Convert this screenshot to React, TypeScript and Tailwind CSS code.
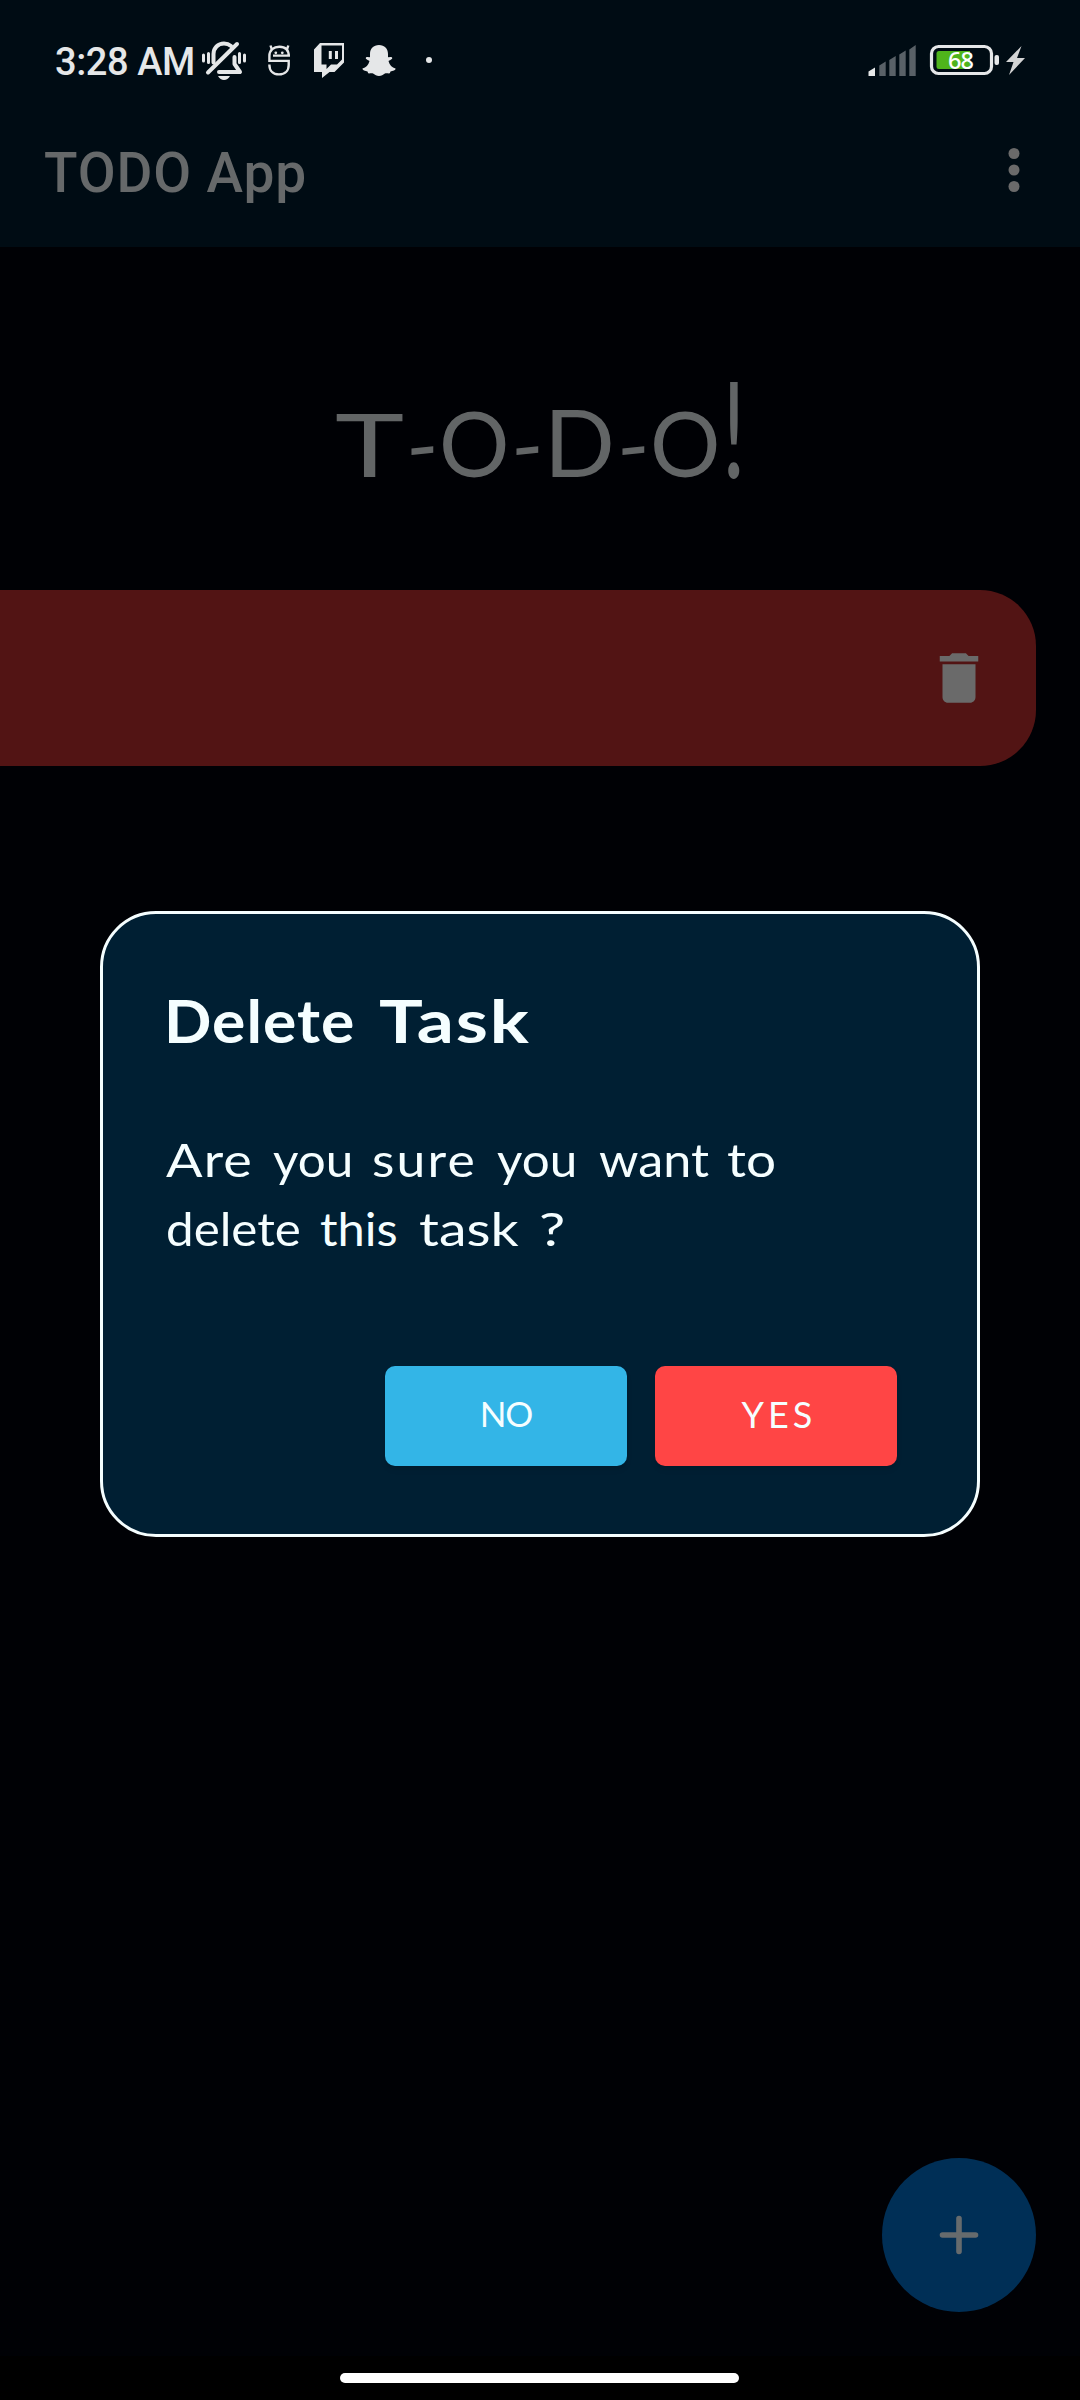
import type { ReactNode } from "react";

function Word({ children, className }: { children: ReactNode; className: string }) {
  return <span className={`block shrink-0 whitespace-nowrap ${className}`}>{children}</span>;
}

function StatusBar() {
  return (
    <div className="flex h-[120px] items-start">
      <span className="ml-[55px] mt-[40px] w-[147px] whitespace-nowrap text-[38px] leading-[44px] font-medium tracking-[-0.4px] text-[#e5e7e8]">
        3:28 AM
      </span>
      <svg className="mt-[30px] h-[60px] w-[248px] shrink-0" viewBox="202 30 248 60" fill="none">
        <g stroke="#e5e7e8" strokeLinecap="round">
          <path strokeWidth="3" d="M203.500 55v6M208.500 53.500v9M239.500 53.500v9M244.500 55v6" />
          <path strokeWidth="4" d="M213.500 62.500V54c0-6 4.500-10.500 10.500-10.500 3 0 5 .8 7 2.500M234.500 57v7l5.500 8H219" strokeLinejoin="round" />
          <path strokeWidth="4" d="M208 72.500L237 44" />
        </g>
        <path fill="#e5e7e8" d="M218 76h12c-1.500 2.700-3.500 4-6 4s-4.500-1.300-6-4z" />
        <g stroke="#e5e7e8" strokeWidth="2.400">
          <path d="M290 55.600H273M288.700 56c0-6-3.500-9.300-9.300-9.300s-10 3.500-10 9.300v4.900h19.300v4c0 6-4 9.500-9.700 9.500s-9.600-3.500-9.600-9.500v-.5M271.800 49.500l-1.300-4M287 49.500l1.300-4" />
        </g>
        <g fill="#e5e7e8">
          <circle cx="275.800" cy="52.800" r="1.400" />
          <circle cx="282.300" cy="52.800" r="1.400" />
          <path fillRule="evenodd" d="M320 43h24v19.500l-9.500 9.500h-5l-7.500 6v-6h-8V49.500zM321.500 45.500v19h5v4.500l4.500-4.500h6l5-5v-14z" />
          <path d="M328.800 51h3v8h-3zM335 51h3v8h-3z" />
          <path d="M379 45c5.500 0 9 3.500 9 9v3c1.500.5 3-.4 4 .6 1 1.400-1.500 2.400-3.500 3.400 1 4 3.500 6.500 7 7.500.7 1.500-3 2.500-5 3-.5 1-.5 2-1.500 2-1.500 0-3-.5-4.500.3-1.500.9-3 2.200-5.500 2.200s-4-1.300-5.500-2.200c-1.500-.8-3-.3-4.500-.3-1 0-1-1-1.500-2-2-.5-5.500-1.500-5-3 3.500-1 6-3.500 7-7.500-2-1-4.500-2-3.500-3.400 1-1 2.500-.1 4-.6v-3c0-5.500 3.500-9 9-9z" />
          <circle cx="429" cy="60" r="3" />
        </g>
      </svg>
      <svg className="ml-auto mr-[50px] mt-[30px] h-[60px] w-[165px] shrink-0" viewBox="865 30 165 60" fill="none">
        <path fill="#e5e7e8" d="M868.500 71.500l6.500-4V76h-6.500z" />
        <path fill="#596167" d="M879.300 65.500l6.400-4V76h-6.400zM889.300 60l6.400-4v20h-6.400zM899.300 54.500l6.400-4V76h-6.400zM909.300 49.500l6.400-4.500v31h-6.400z" />
        <rect x="931.500" y="46.500" width="60" height="27" rx="7" stroke="#e5e7e8" strokeWidth="3.200" />
        <path fill="#4fb41b" d="M939 51h31v18h-31q-2.500 0-2.500-2.500v-13q0-2.500 2.500-2.500z" />
        <rect x="994.500" y="55" width="4.500" height="10" rx="2" fill="#e5e7e8" />
        <path fill="#d3d4d4" d="M1021.500 46l-15.500 16h7.500l-4.500 13 16-17h-8z" />
        <text x="948" y="69" fill="#fff" fontSize="23.500" fontWeight="500" textLength="26" className="font-['Noto_Sans']">
          68
        </text>
      </svg>
    </div>
  );
}

function AppBar() {
  return (
    <div className="flex h-[127px] items-start">
      <h1 className="ml-[44px] mt-[21px] text-[55px] leading-[64px] font-medium tracking-[0.9px] text-[#66696a]">TODO App</h1>
      <svg className="ml-auto mr-[33px] mt-[17px] size-[66px]" viewBox="0 0 24 24" fill="#6a6a6a">
        <circle cx="12" cy="6" r="2" />
        <circle cx="12" cy="12" r="2" />
        <circle cx="12" cy="18" r="2" />
      </svg>
    </div>
  );
}

function Banner() {
  return (
    <div className="flex h-[343px] items-start pl-[335px] pt-[136px] font-['Lato'] text-[88px] leading-[120px] text-[#626566]">
      <Word className="w-[71px] origin-left scale-x-[1.33]">T</Word>
      <Word className="w-[33px] origin-[17px_68px] -skew-y-6">-</Word>
      <Word className="w-[72px] origin-[0_93px] scale-y-[1.03]">O</Word>
      <Word className="w-[33px] origin-[17px_68px] -skew-y-6">-</Word>
      <Word className="w-[73px] origin-[0_93px] scale-x-[1.06] scale-y-[1.06]">D</Word>
      <Word className="w-[33px] origin-[17px_68px] -skew-y-6">-</Word>
      <Word className="w-[72px] origin-[0_93px] scale-y-[1.03]">O</Word>
      <Word className="origin-[17px_93px] scale-y-[1.53]">!</Word>
    </div>
  );
}

function Dialog() {
  return (
    <div className="absolute left-[100px] top-[911px] flex h-[626px] w-[880px] flex-col rounded-[56px] border-[3px] border-[#f5feff] bg-[#001f33] font-['Lato'] text-[#f5feff]">
      <h2 className="mt-[70px] flex pl-[61px] text-[60px] leading-[72px] font-bold">
        <Word className="w-[215px] origin-left scale-x-[1.04] tracking-[1px]">Delete</Word>
        <Word className="origin-left scale-x-[1.22] tracking-[1.500px]">Task</Word>
      </h2>
      <div className="mt-[69px] pl-[63px] text-[47px] leading-[69px]">
        <p className="flex">
          <Word className="w-[107px] origin-left scale-x-[1.15] tracking-[1px]">Are</Word>
          <Word className="w-[99px] origin-left scale-x-[1.05]">you</Word>
          <Word className="w-[125px] origin-left scale-x-[1.1] tracking-[2px]">sure</Word>
          <Word className="w-[102px] origin-left scale-x-[1.05]">you</Word>
          <Word className="w-[128px] origin-left scale-x-[1.07]">want</Word>
          <Word className="origin-left scale-x-[1.13]">to</Word>
        </p>
        <p className="flex">
          <Word className="w-[154px] origin-left scale-x-[1.05]">delete</Word>
          <Word className="w-[99px] origin-left scale-x-[1.04]">this</Word>
          <Word className="w-[120px] origin-left scale-x-[1.18]">task</Word>
          <Word className="origin-left scale-x-[1.25]">?</Word>
        </p>
      </div>
      <div className="ml-[282px] mt-[103px] flex gap-[28px] text-[36px]">
        <button className="h-[100px] w-[242px] rounded-[10px] bg-[#33b5e7] pb-[5px] text-[35px] tracking-[-1px] shadow-md">NO</button>
        <button className="h-[100px] w-[242px] rounded-[10px] bg-[#ff4545] pb-[5px] pl-[6px] tracking-[4px] shadow-md">YES</button>
      </div>
    </div>
  );
}

export default function App() {
  return (
    <div className="relative flex h-[2400px] w-[1080px] flex-col overflow-hidden bg-[#000105] font-['Roboto']">
      <header className="h-[247px] bg-[#000c14]">
        <StatusBar />
        <AppBar />
      </header>
      <Banner />
      <div className="flex h-[176px] w-[1036px] items-center justify-end rounded-r-[56px] bg-[#521414] pr-[44px]">
        <svg className="size-[66px]" viewBox="0 0 24 24" fill="#6a6a6a">
          <path d="M6 19c0 1.100.9 2 2 2h8c1.100 0 2-.9 2-2V7H6v12zM19 4h-3.500l-1-1h-5l-1 1H5v2h14V4z" />
        </svg>
      </div>
      <button className="mb-[44px] mr-[44px] mt-auto flex size-[154px] items-center justify-center self-end rounded-full bg-[#002f56]">
        <svg className="size-[66px]" viewBox="0 0 66 66" stroke="#666b6d" strokeWidth="5.600" strokeLinecap="round">
          <path d="M16.500 33h33M33 16.500v33" />
        </svg>
      </button>
      <footer className="flex h-[44px] bg-black pl-[340px]">
        <div className="mt-[17px] h-[10px] w-[399px] rounded-full bg-white" />
      </footer>
      <Dialog />
    </div>
  );
}
